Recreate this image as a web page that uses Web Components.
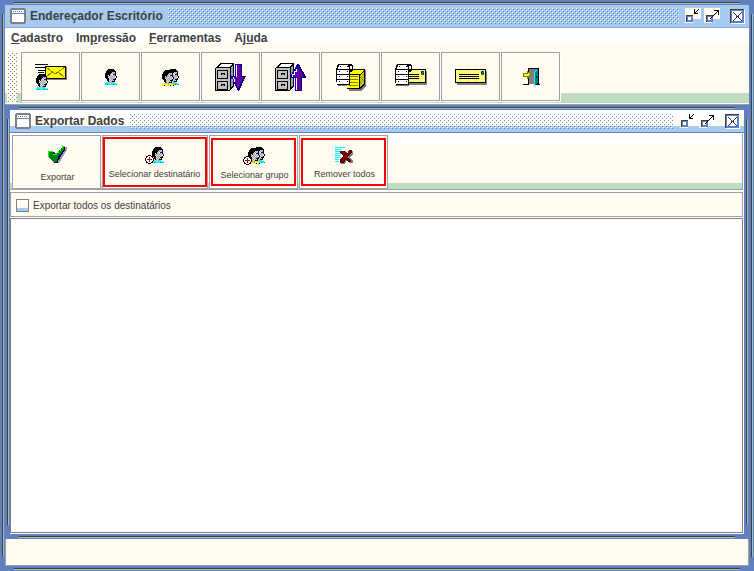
<!DOCTYPE html>
<html lang="pt-BR">
<head>
<meta charset="utf-8">
<title>Endereçador Escritório</title>
<style>
html, body { margin: 0; height: 100%; }
body { font: 11px "Liberation Sans", Arial, sans-serif; color: #404040; --blue: #6080c0; --sky: #a6caf0; --cream: #fffbf0; --mint: #c0dcc0; --gray: #a0a0a4; }
</style>
</head>
<body>
<window-frame class="outer">
  <title-bar slot="title">Endereçador Escritório</title-bar>
  <menu-bar></menu-bar>
  <main-toolbar></main-toolbar>
  <window-frame class="inner">
    <title-bar slot="title" class="pale">Exportar Dados</title-bar>
    <export-panel></export-panel>
  </window-frame>
  <status-bar></status-bar>
</window-frame>
<script>
const COLORS = { K: '#000', w: '#fff', g: '#a0a0a4', B: '#0000ff', C: '#00ffff', Y: '#ffff00', R: '#c00000', T: '#008080', G: '#808080', l: '#d8d8d8', N: '#303060' };

// Turns rows of letters into one-pixel-high SVG runs.
function pixels(map, dx = 0, dy = 0) {
  let out = '';
  map.trim().split('\n').forEach((row, y) => {
    row = row.trim();
    for (let x = 0; x < row.length;) {
      let n = 1;
      while (row[x + n] === row[x]) n++;
      const fill = COLORS[row[x]];
      if (fill) out += `<rect x="${x + dx}" y="${y + dy}" width="${n}" height="1" fill="${fill}"/>`;
      x += n;
    }
  });
  return out;
}
const HEAD = `
...KKKKKK...
..KKKKKKKK..
.KKKKKKKKKK.
.KKKKKKlglK.
KKKKKKlglgK.
KKKKKglwBBK.
KKKlKlglglK.
KKKglglglglK
KKKlglglglwK
.KKKlglglgK.
..KKglglKKK.
..KKlglglK..
...KglgKKK..
.CClglgCC...
CCCCClgCCCC.
CCTCCCCCTCCT`;
const FACE = HEAD.replace(/C/g, 'Y').replace(/T/g, 'K');
const PLUS = `
...KKK...
.KKwwwKK.
.KwwRwwK.
KwwwRwwwK
KwRRRRRwK
KwwwRwwwK
.KwwRwwK.
.KKwwwKK.
...KKK...`;
const cabinet = `
<path d="M0 5L6 0H19V23L15 28H0Z" fill="#000"/><path d="M3 4L7 1H17L14 4Z" fill="#fff"/>
<path d="M16 5L18 2V22L16 25Z" fill="#a0a0a4"/><path d="M1 5H15V27H1Z" fill="#c0c0c0"/>
<path d="M2 7H13V16H2ZM2 18H13V27H2Z" fill="#000"/><path d="M3 8H12V15H3ZM3 19H12V26H3Z" fill="#c0c0c0"/>
<path d="M6 10H10V12H6ZM6 21H10V23H6Z" fill="#000"/><path d="M7 11H9V12H7ZM7 22H9V23H7Z" fill="#808080"/>`;
const checker = (id, a, b) => `<defs><pattern id="${id}" width="2" height="2" patternUnits="userSpaceOnUse"><rect width="2" height="2" fill="${a}"/><path d="M0 0H1V1H0ZM1 1H2V2H1Z" fill="${b}"/></pattern></defs>`;
const letter = `${checker('d', '#ff0', '#fffbf0')}
<path d="M2 2H32V16H2Z" fill="#808080"/><path d="M0 0H31V14H0Z" fill="#000"/><path d="M1 1H30V13H1Z" fill="url(#d)"/>
<path d="M4 5H24V6H4ZM4 7H24V8H4ZM4 9H24V10H4Z" fill="#000"/><path d="M26 2H29V6H26Z" fill="#008080"/><path d="M27 2H28V3H27ZM26 3H27V4H26ZM28 4H29V5H28Z" fill="#000"/>`;
const roll = `
<path d="M2 0H16L17 2V6L15 8H14V21H1V19L0 18V5Z" fill="#000"/>
<path d="M3 1H12L13 5H2ZM1 6H13V10H1ZM1 11H13V15H1ZM1 16H13V20H1ZM14 2H16V5H14Z" fill="#fff"/>
<path d="M3 7H4V8H3ZM11 7H12V8H11ZM3 12H4V13H3ZM11 12H12V13H11ZM3 17H4V18H3ZM11 17H12V18H11ZM4 2H5V3H4ZM11 2H12V3H11Z" fill="#000"/>`;
const ICONS = {
  mail: [33, 27, `<path d="M0 0H13V1H0ZM0 3H13V4H0ZM3 6H10V7H3ZM3 8H9V9H3Z" fill="#000"/>
    <path d="M12 3H32V16H12Z" fill="#808080"/><path d="M10 2H31V15H10Z" fill="#000"/><path d="M11 3H30V14H11Z" fill="#ff0"/>
    <path d="M11 3L20 10L30 3M11 13L17 8M23 8L29 13" fill="none" stroke="#808000"/>` + pixels(HEAD, 1, 10)],
  person: [13, 17, pixels(HEAD)],
  group: [19, 17, pixels(HEAD, 5, 0) + pixels(FACE, 0, 1)],
  down: [33, 29, cabinet + checker('p', '#4000c0', '#800080') + `<path d="M20 1H27V13H31L24 28H23L16 13H20Z" fill="#000080"/><path d="M21 2H26V14H29L23 26L18 14H21Z" fill="url(#p)"/><path d="M20 1H21V13H20ZM16 13H18V16H16ZM18 16H19V19H18ZM20 20H21V23H20Z" fill="#00f"/><path d="M21 2H22V14H21ZM18 14H19V16H18ZM19 16H20V19H19Z" fill="#fff"/>`],
  up: [33, 29, cabinet + checker('p', '#4000c0', '#800080') + `<path d="M22 1H24L31 14V15H27V28H20V15H15V14Z" fill="#000080"/><path d="M23 3L29 14H26V27H21V14H17Z" fill="url(#p)"/><path d="M22 2H23V5H21V8H19V11H17V14H16V11H18V8H20V5H21ZM20 15H21V27H20Z" fill="#00f"/><path d="M21 15H22V27H21ZM21 6H22V9H20V12H18V14H17V11H19V8H21Z" fill="#fff"/>`],
  box: [31, 27, `<path d="M11 14V10L16 6H30V22L26 27H13V22H2V20H11Z" fill="#808080"/><path d="M10 10L16 5H29V20L24 25H11Z" fill="#000"/><path d="M12 10L16 6H28L24 10Z" fill="#ff0"/><path d="M11 11H23V24H11Z" fill="#ff0"/><path d="M24 11L28 7V19L24 23Z" fill="#c0c000"/><path d="M13 12H22V13H13ZM13 15H22V16H13ZM13 18H22V19H13ZM13 21H22V22H13ZM24 13H25V14H24ZM26 15H27V16H26ZM24 18H25V19H24Z" fill="#808000"/>` + roll],
  rolls: [33, 27, `<g transform="translate(0 5)">${letter}</g><path d="M1 21H14V22H1Z" fill="#808080"/>` + roll],
  letter: [33, 17, letter],
  exit: [17, 19, `<path d="M5 0H16V16H17V17H11V16H5Z" fill="#000"/><path d="M6 1H14V16H6Z" fill="#808080"/><path d="M0 16H6V17H0Z" fill="#000"/><path d="M11 4L15 1V15L11 18Z" fill="#008080"/><path d="M11 4H12V18H11ZM12 3H13V4H12ZM13 2H14V3H13Z" fill="#0ff"/><path d="M13 8H14V10H13Z" fill="#000"/><path d="M0 5H4V3L8 7L4 11V9H0Z" fill="#808000"/><path d="M1 6H5V5L7 7L5 8H1Z" fill="#ff0"/>`],
  check: [19, 18, `<path d="M2 6H6L9 9L16 1H19V4L11 17H7Z" fill="#a0a0a4"/><path d="M1 5H5L8 9L14 1H17V4L10 15V17H6L1 12Z" fill="#000080"/><path d="M0 5H5V9H8L14 1H16V3L10 11L9 16H6L0 11Z" fill="#008000"/><path d="M0 5H5V6H1V11H0ZM5 8H8V7H10V5H12V3H14V0H17V1H15V3H13V5H11V7H9V9H5Z" fill="#0f0"/>`],
  addPerson: [19, 17, pixels(HEAD, 7, 0) + pixels(PLUS, 0, 8)],
  addGroup: [23, 18, pixels(HEAD, 10, 0) + pixels(FACE, 5, 1) + pixels(PLUS, 0, 9)],
  remove: [19, 17, `<path d="M0 0H10V1H0ZM0 2H6V3H0ZM0 4H6V5H0ZM0 6H6V7H0ZM0 8H6V9H0ZM0 10H6V11H0ZM0 12H4V13H0ZM0 14H4V15H0Z" fill="#0ff"/><path d="M6 4H10L13 7L16 4H18V7L15 10L18 14V16H14L12 13L10 17H6V14L9 10Z" fill="#808080"/><path d="M5 4H9L12 7L14 3H17V5L13 10L16 14V15H13L11 12L9 16H5V13L8 9L5 6Z" fill="#400000"/><path d="M6 4H9L12 8L14 4H16L12 9L15 14H13L11 11L8 15H6L9 9Z" fill="#900000"/>`],
  window: [16, 16, `<path d="M1 0H15V1H16V15H15V16H1V15H0V1H1Z" fill="#808080"/><path d="M2 2H14V5H2ZM2 6H14V14H2Z" fill="#fff"/><path d="M3 3H4V4H3ZM5 3H6V4H5ZM7 3H8V4H7ZM9 3H10V4H9ZM11 3H12V4H11ZM2 5H14V6H2Z" fill="#6080c0"/>`],
  min: [16, 16, `<path d="M0 0H16V11H8V15H0Z" fill="var(--patch)"/><path d="M1 7H8V14H1Z" fill="#404040"/><path d="M2 8H8V14H2Z" fill="#6080c0"/><path d="M3 9H6V12H3Z" fill="#fff"/>` + pixels(`
K...K
K..K.
K.K..
KK...
KKKK.`, 9, 1)],
  max: [16, 16, `<path d="M0 0H16V11H8V15H0Z" fill="var(--patch)"/><path d="M2 7H9V14H2Z" fill="#404040"/><path d="M3 8H9V14H3Z" fill="#6080c0"/><path d="M4 9H7V12H4Z" fill="#fff"/>` + pixels(`
....KKKKK
.......KK
......K.K
.....K..K
....K...K
...K.....
..K......
.K.......
K........`, 6, 2)],
  close: [16, 16, `<path d="M2 2H16V16H2Z" fill="#fff"/><path d="M1 1H15V15H1Z" fill="#404040"/><path d="M2 2H15V15H2Z" fill="#6080c0"/><path d="M3 3H13V13H3Z" fill="#fff"/>` + pixels(`
N.......N
.N.....N.
..N...N..
...N.N...
...NNN...
...N.N...
..N...N..
.N.....N.
N.......N`, 4, 4)]
};

function define(name, render) {
  customElements.define(name, class extends HTMLElement {
    constructor() { super(); this.attachShadow({ mode: 'open' }); }
    connectedCallback() { this.shadowRoot.innerHTML = render(this); }
  });
}

define('pixel-icon', el => {
  const [w, h, body] = ICONS[el.getAttribute('name')];
  return `<style>:host{display:block;flex:none}svg{display:block}</style><svg width="${w}" height="${h}" viewBox="0 0 ${w} ${h}" shape-rendering="crispEdges" aria-hidden="true">${body}</svg>`;
});

define('window-frame', () => `<style>
:host{display:flex;flex-direction:column;box-sizing:border-box;padding:5px;min-height:0;background:
 linear-gradient(#404040 50%,#a0c0c0 50%) 50% 2px/calc(100% - 28px) 2px no-repeat,
 linear-gradient(#404040 50%,#a0c0c0 50%) 50% calc(100% - 1px)/calc(100% - 28px) 2px no-repeat,
 linear-gradient(90deg,#404040 50%,#a0c0c0 50%) 2px 50%/2px calc(100% - 28px) no-repeat,
 linear-gradient(90deg,#404040 50%,#a0c0c0 50%) calc(100% - 1px) 50%/2px calc(100% - 28px) no-repeat, var(--blue)}
:host(.outer){height:100vh}
:host(.inner){flex:1}
</style><slot name="title"></slot><slot></slot>`);

define('title-bar', () => `<style>
:host{--patch:#fffbf0;display:flex;align-items:center;flex:none;box-sizing:border-box;height:23px;padding:0 4px 0 5px;background:var(--sky);border-bottom:1px solid #90a8d0;font-size:12px;font-weight:bold;white-space:nowrap}
:host(.pale){--patch:#fff;background:linear-gradient(#fff 8px,var(--cream) 8px 16px,var(--sky) 16px);border-bottom-color:var(--blue)}
h1{margin:0 5px 0 4px;font:inherit}
svg{flex:1;height:16px;min-width:0;margin-right:6px}
button{display:block;padding:0;border:0;background:none;margin-right:3px}
button:last-child{margin:0 0 0 6px}
</style><pixel-icon name="window"></pixel-icon><h1><slot></slot></h1>
<svg shape-rendering="crispEdges" aria-hidden="true"><defs><pattern id="b" width="4" height="4" patternUnits="userSpaceOnUse"><path d="M0 0H1V1H0ZM2 2H3V3H2Z" fill="#fff"/><path d="M1 1H2V2H1ZM3 3H4V4H3Z" fill="#6080c0"/></pattern></defs><rect width="100%" height="100%" fill="url(#b)"/></svg>
<button aria-label="Minimizar"><pixel-icon name="min"></pixel-icon></button><button aria-label="Maximizar"><pixel-icon name="max"></pixel-icon></button><button aria-label="Fechar"><pixel-icon name="close"></pixel-icon></button>`);

define('menu-bar', () => `<style>
:host{display:block;flex:none;background:linear-gradient(#fff 15px,var(--cream) 15px)}
nav{display:flex;gap:13px;height:20px;padding:0 6px;align-items:center}
button{border:0;padding:0;background:none;font:bold 12px/20px "Liberation Sans",Arial,sans-serif;color:inherit}
</style><nav><button><u>C</u>adastro</button><button>Im<u>p</u>ressão</button><button><u>F</u>erramentas</button><button>Aj<u>u</u>da</button></nav>`);

define('main-toolbar', () => `<style>
:host{display:flex;flex:none;box-sizing:border-box;height:57px;padding:4px 0 2px 2px;border-bottom:1px solid var(--gray);background:linear-gradient(var(--cream) 45px,var(--mint) 45px 55px,#fff 55px)}
svg{width:12px;height:51px;margin-right:2px}
button{display:flex;align-items:center;justify-content:center;flex:none;box-sizing:border-box;width:59px;height:49px;margin-right:1px;padding:2px 0 0 2px;border:1px solid var(--gray);background:var(--cream);box-shadow:1px 1px #fff}
</style><svg shape-rendering="crispEdges" aria-hidden="true"><defs><pattern id="g" width="4" height="4" patternUnits="userSpaceOnUse"><rect width="4" height="4" fill="#fffbf0"/><path d="M1 1H2V2H1ZM3 3H4V4H3Z" fill="#808080"/></pattern></defs><rect width="10" height="51" fill="url(#g)"/></svg>` +
[['mail', 'Correspondência'], ['person', 'Destinatário'], ['group', 'Grupo'], ['down', 'Importar'], ['up', 'Exportar'], ['box', 'Etiquetas e caixas'], ['rolls', 'Etiquetas'], ['letter', 'Envelope'], ['exit', 'Sair']]
  .map(([n, t]) => `<button aria-label="${t}"><pixel-icon name="${n}"></pixel-icon></button>`).join(''));

define('action-button', el => `<style>
:host{display:block;flex:none}
button{position:relative;display:flex;flex-direction:column;align-items:center;box-sizing:border-box;width:89px;height:54px;padding:10px 0 0 2px;gap:5px;border:1px solid var(--gray);background:var(--cream);box-shadow:inset 0 0 0 1px #fff;font:9px/16px "Liberation Sans",Arial,sans-serif;color:inherit;white-space:nowrap}
:host([wide]) button{width:106px;padding:11px 1px 0 0}
:host([marked]) button{gap:2px;padding-top:11px}
:host([marked]) button::after{content:"";position:absolute;inset:2px 1px;border:2px solid #f00}
:host([wide]) button::after{inset:1px 0}
</style><button><pixel-icon name="${el.getAttribute('icon')}"></pixel-icon><span><slot></slot></span></button>`);

define('export-panel', () => `<style>
:host{display:flex;flex-direction:column;flex:1;min-height:0;background:#fff;padding:1px 1px 1px 0}
.bar{display:flex;gap:1px;height:56px;flex:none;padding:1px 0 0 2px;box-sizing:border-box;border:solid var(--gray);border-width:0 1px 1px 0;background:linear-gradient(#fff 11px,var(--cream) 11px 49px,var(--mint) 49px)}
label{display:flex;align-items:center;gap:4px;height:25px;flex:none;box-sizing:border-box;margin-top:2px;padding:1px 0 0 5px;border:1px solid var(--gray);background:var(--cream);font-size:10px}
input{appearance:none;box-sizing:border-box;width:13px;height:13px;margin:0;border:1px solid #808080;background:linear-gradient(#fff 4px,var(--cream) 4px 8px,var(--sky) 8px)}
.list{flex:1;margin-top:1px;border:1px solid #808080;background:#fff}
</style><div class="bar"><action-button icon="check">Exportar</action-button><action-button icon="addPerson" marked wide>Selecionar destinatário</action-button><action-button icon="addGroup" marked>Selecionar grupo</action-button><action-button icon="remove" marked>Remover todos</action-button></div>
<label><input type="checkbox">Exportar todos os destinatários</label><div class="list"></div>`);

define('status-bar', () => `<style>:host{display:block;flex:none;box-sizing:border-box;height:27px;border:solid var(--gray);border-width:0 1px 1px;background:var(--cream);box-shadow:inset 0 -1px #fff}</style>`);
</script>
</body>
</html>
